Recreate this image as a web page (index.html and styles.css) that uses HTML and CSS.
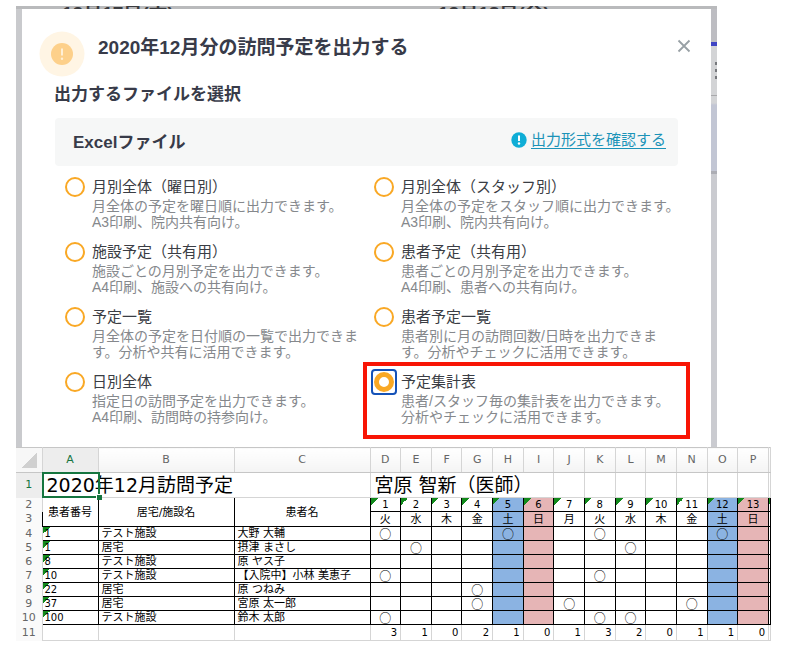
FILE: index.html
```html
<!DOCTYPE html>
<html lang="ja">
<head>
    <meta charset="UTF-8">
    <meta name="viewport" content="width=device-width, initial-scale=1.0">
    <title>訪問予定の出力</title>
    <link rel="stylesheet" href="styles.css">
</head>
<body>
    <main class="page">
        <div class="screen">
            <div class="calendar-days">
                <span>12月17日(木)</span>
                <span>12月18日(金)</span>
            </div>
            <div class="screen-body">
                <section class="modal">
                    <header class="modal-header">
                        <svg class="warning-icon" viewBox="0 0 46 46">
                            <circle cx="23" cy="23" r="22.5" fill="#fff5e4"/>
                            <circle cx="23" cy="23" r="11" fill="#fdd08a"/>
                            <path d="M23 17.5v7" stroke="#fff0d6" stroke-width="2"/>
                            <circle cx="23" cy="27.7" r="1.2" fill="#fff0d6"/>
                        </svg>
                        <h1>2020年12月分の訪問予定を出力する</h1>
                        <button class="close-btn" aria-label="閉じる">
                            <svg width="14" height="14" viewBox="0 0 14 14">
                                <path d="M1.5 1.5l11 11M12.5 1.5l-11 11" stroke="#98a0a5" stroke-width="1.8"/>
                            </svg>
                        </button>
                    </header>
                    <h2>出力するファイルを選択</h2>
                    <div class="panel">
                        <h3>Excelファイル</h3>
                        <a href="#">
                            <svg width="16" height="16" viewBox="0 0 16 16">
                                <circle cx="8" cy="8" r="7.7" fill="#0fadd6"/>
                                <path d="M8 3.5v5.5" stroke="#fff" stroke-width="2"/>
                                <circle cx="8" cy="11.5" r="1.2" fill="#fff"/>
                            </svg>
                            <span>出力形式を確認する</span>
                        </a>
                    </div>
                    <div class="options">
                        <div class="option">
                            <input type="radio" name="file" id="monthly-day">
                            <label for="monthly-day">月別全体（曜日別）
                                <small>月全体の予定を曜日順に出力できます。<br>A3印刷、院内共有向け。</small>
                            </label>
                        </div>
                        <div class="option">
                            <input type="radio" name="file" id="monthly-staff">
                            <label for="monthly-staff">月別全体（スタッフ別）
                                <small>月全体の予定をスタッフ順に出力できます。<br>A3印刷、院内共有向け。</small>
                            </label>
                        </div>
                        <div class="option">
                            <input type="radio" name="file" id="facility">
                            <label for="facility">施設予定（共有用）
                                <small>施設ごとの月別予定を出力できます。<br>A4印刷、施設への共有向け。</small>
                            </label>
                        </div>
                        <div class="option">
                            <input type="radio" name="file" id="patient">
                            <label for="patient">患者予定（共有用）
                                <small>患者ごとの月別予定を出力できます。<br>A4印刷、患者への共有向け。</small>
                            </label>
                        </div>
                        <div class="option">
                            <input type="radio" name="file" id="list">
                            <label for="list">予定一覧
                                <small>月全体の予定を日付順の一覧で出力できま<br>す。分析や共有に活用できます。</small>
                            </label>
                        </div>
                        <div class="option">
                            <input type="radio" name="file" id="patient-list">
                            <label for="patient-list">患者予定一覧
                                <small>患者別に月の訪問回数/日時を出力できま<br>す。分析やチェックに活用できます。</small>
                            </label>
                        </div>
                        <div class="option">
                            <input type="radio" name="file" id="daily">
                            <label for="daily">日別全体
                                <small>指定日の訪問予定を出力できます。<br>A4印刷、訪問時の持参向け。</small>
                            </label>
                        </div>
                        <div class="option highlight">
                            <input type="radio" name="file" id="summary" checked>
                            <label for="summary">予定集計表
                                <small>患者/スタッフ毎の集計表を出力できます。<br>分析やチェックに活用できます。</small>
                            </label>
                        </div>
                    </div>
                </section>
                <div class="calendar-edge"></div>
            </div>
        </div>

        <table class="sheet">
            <colgroup>
                <col class="col-head"><col class="col-id"><col class="col-name"><col class="col-name">
                <col span="13">
                <col class="col-last">
            </colgroup>
            <thead id="letters"></thead>
            <tbody id="rows"></tbody>
        </table>
    </main>
    <script>
        const weekdays = ['火', '水', '木', '金', '土', '日', '月', '火', '水', '木', '金', '土', '日'];
        const totals = [3, 1, 0, 2, 1, 0, 1, 3, 2, 0, 1, 1, 0];
        // visits: days of the month with a visit
        const patients = [
            { id: 1, place: 'テスト施設', name: '大野 大輔', visits: [1, 5, 8, 12] },
            { id: 1, place: '居宅', name: '摂津 まさし', visits: [2, 9] },
            { id: 8, place: 'テスト施設', name: '原 ヤス子', visits: [] },
            { id: 10, place: 'テスト施設', name: '【入院中】小林 美恵子', visits: [1, 8] },
            { id: 22, place: '居宅', name: '原 つねみ', visits: [4] },
            { id: 37, place: '居宅', name: '宮原 太一郎', visits: [4, 7, 11] },
            { id: 100, place: 'テスト施設', name: '鈴木 太郎', visits: [1, 8, 9] },
        ];

        function dayClass(i) {
            if (weekdays[i] === '土') return 'sat';
            if (weekdays[i] === '日') return 'sun';
            return '';
        }

        // Column letters
        const letters = 'ABCDEFGHIJKLMNOP'.split('');
        document.getElementById('letters').innerHTML =
            '<tr><th class="corner"></th>' +
            letters.map(l => `<th class="${l === 'A' ? 'active' : ''}">${l}</th>`).join('') +
            '<th></th></tr>';

        // Title and day rows
        let html = `<tr class="title-row"><th class="active">1</th>
            <td colspan="3" class="selected">2020年12月訪問予定</td>
            <td colspan="6">宮原 智新（医師）</td>${'<td></td>'.repeat(8)}</tr>`;
        html += `<tr class="grid-row"><th>2</th>
            <td rowspan="2" class="center">患者番号</td>
            <td rowspan="2" class="center">居宅/施設名</td>
            <td rowspan="2" class="center">患者名</td>
            ${weekdays.map((d, i) => `<td class="day flag ${dayClass(i)}">${i + 1}</td>`).join('')}
            <td class="flag"></td></tr>`;
        html += `<tr class="grid-row week-row"><th>3</th>
            ${weekdays.map((d, i) => `<td class="center ${dayClass(i)}">${d}</td>`).join('')}<td></td></tr>`;

        // Patients
        patients.forEach((p, n) => {
            html += `<tr class="grid-row"><th>${n + 4}</th>
                <td class="id flag">${p.id}</td><td>${p.place}</td><td>${p.name}</td>
                ${weekdays.map((d, i) => `<td class="mark ${dayClass(i)}">${p.visits.includes(i + 1) ? '○' : ''}</td>`).join('')}
                <td></td></tr>`;
        });

        // Totals
        html += `<tr class="total-row"><th>11</th><td></td><td></td><td></td>
            ${totals.map(t => `<td>${t}</td>`).join('')}<td></td></tr>`;
        document.getElementById('rows').innerHTML = html;
    </script>
</body>
</html>
```

FILE: styles.css
```css
*,
*::before,
*::after {
    box-sizing: border-box;
}
body {
    margin: 0;
    background: #fff;
    color: #33363f;
    font-family: "Liberation Sans", "Noto Sans CJK JP", sans-serif;
}
h1, h2, h3 {
    margin: 0;
    font-weight: bold;
    color: #383b49;
}
.page {
    padding: 6px 29px 0 16px;
}

/* Calendar behind the dialog */
.screen {
    margin-right: 54px;
    padding-left: 6px;
    background: #c9cacd;
}
.calendar-days {
    display: grid;
    grid-template-columns: 376px 1fr;
    height: 3px;
    padding-left: 40px;
    margin-left: -6px;
    overflow: hidden;
    background: #b9babc;
    color: #3a3b3f;
    font-size: 19px;
    line-height: 15px;
    font-weight: bold;
}
.calendar-days span {
    padding-left: 6px;
}
.screen-body {
    display: flex;
}
.calendar-edge {
    width: 6px;
    background:
        linear-gradient(#d3d4d6, #d3d4d6) 0 50px / 4px 24px no-repeat,
        linear-gradient(#bdbdc2 33px, #3f45c4 33px 37px, #d3d4d6 37px 53px,
        #77797d 53px 56px, #d3d4d6 56px 60px, #77797d 60px 63px, #d3d4d6 63px 67px,
        #77797d 67px 70px, #d3d4d6 70px 86px, #a9a9ac 86px 87px, #d3d4d6 87px 94px,
        #c2c6d4 96px 162px, #acadb4 162px 165px, #cacbd0 165px);
}

/* Dialog */
.modal {
    flex: 1;
    padding: 22px 0;
    background: #fff;
}
.modal-header {
    display: flex;
    align-items: flex-start;
    padding: 0 20px 0 17px;
}
.warning-icon {
    width: 46px;
    height: 46px;
    margin-right: 13px;
}
.modal-header h1 {
    flex: 1;
    padding-top: 3px;
    font-size: 19px;
    line-height: 28px;
}
.close-btn {
    display: flex;
    padding: 8px 0;
    border: none;
    background: none;
    cursor: pointer;
}
.modal h2 {
    margin: 6px 32px 11px;
    font-size: 17px;
    line-height: 24px;
}
.panel {
    display: flex;
    justify-content: space-between;
    align-items: center;
    height: 48px;
    margin: 0 33px;
    padding: 0 12px 0 18px;
    border-radius: 4px;
    background: #f6f7f7;
}
.panel h3 {
    padding-top: 2px;
    font-size: 17px;
    line-height: 24px;
}
.panel a {
    display: flex;
    align-items: center;
    gap: 4px;
    padding-bottom: 4px;
    color: #1b93b8;
    font-size: 15px;
    line-height: 22px;
    text-decoration: none;
}
.panel a span {
    text-decoration: underline;
    text-underline-offset: 3px;
}
.options {
    display: grid;
    grid-template-columns: 1fr 1fr;
    row-gap: 11px;
    margin: 10px 28px 0 43px;
}
.option {
    display: flex;
    gap: 7px;
    position: relative;
}
.option input {
    appearance: none;
    flex: none;
    width: 20px;
    height: 20px;
    margin: 1px 0;
    border: 2px solid #f9a825;
    border-radius: 50%;
    background: #fff;
}
.option input:checked {
    border-width: 5px;
}
.option label {
    color: #3a3d44;
    font-size: 15px;
    line-height: 22px;
    white-space: nowrap;
}
.option small {
    display: block;
    color: #85888c;
    font-size: 14px;
    line-height: 16px;
}
/* focus ring and red frame round the chosen file */
.highlight::before {
    content: "";
    position: absolute;
    top: -2px;
    left: -3px;
    width: 26px;
    height: 26px;
    border: 2px solid #1452b8;
    border-radius: 4px;
}
.highlight::after {
    content: "";
    position: absolute;
    inset: -9px -7px -14px -11px;
    border: 4px solid #f81505;
}

/* Spreadsheet */
.sheet {
    width: 100%;
    border-collapse: collapse;
    table-layout: fixed;
    color: #000;
    font-size: 11px;
    line-height: 12px;
    font-family: "DejaVu Sans", "Noto Sans CJK JP", sans-serif;
    border-top: 1px solid #c6c6c6;
}
.col-head {
    width: 26px;
}
.col-id {
    width: 56px;
}
.col-name {
    width: 136px;
}
.col-last {
    width: 2px;
}
.sheet th,
.sheet td {
    padding: 0;
    white-space: nowrap;
}
.sheet th {
    color: #666;
    font-weight: normal;
    border-right: 1px solid #d5d5d5;
}
.sheet thead th {
    height: 25px;
    border-bottom: 1px solid #c6c6c6;
    background: linear-gradient(#fff, #f4f4f4);
}
.sheet thead th.active {
    background: #ededed;
    border-bottom-color: #15753f;
}
.sheet th.active {
    color: #15753f;
    background: #ededed;
}
.sheet thead th.corner {
    background: linear-gradient(135deg, transparent 50%, #d0d0d0 50%) 5px 5px / 16px 15px no-repeat, #f7f7f7;
}
.sheet tbody th {
    background: #fafafa;
}
.sheet .title-row td {
    height: 25px;
    padding-left: 4px;
    border: 1px solid #d5d5d5;
    font-size: 19px;
    line-height: 22px;
}
.sheet .selected {
    position: relative;
}
.selected::before {
    content: "";
    position: absolute;
    top: -1px;
    left: -1px;
    width: 58px;
    height: 26px;
    border: 2px solid #15753f;
}
.selected::after {
    content: "";
    position: absolute;
    left: 53px;
    bottom: -3px;
    width: 6px;
    height: 6px;
    border: 1px solid #fff;
    border-width: 1px 0 0 1px;
    background: #15753f;
}
.grid-row {
    height: 14px;
}
.week-row {
    height: 15px;
}
.sheet .grid-row td {
    padding: 1px 0 0 3px;
    border: 1px solid #000;
}
.sheet .grid-row .center,
.sheet .grid-row .day {
    padding: 1px 0 0;
    text-align: center;
}
.sheet .grid-row .id {
    padding-left: 2px;
}
.day,
.id,
.total-row td {
    font-size: 10px;
}
.flag {
    background: linear-gradient(135deg, #128a1c 50%, transparent 50%) 0 0 / 7px 7px no-repeat;
}
.sheet .grid-row .mark {
    padding: 0;
    font-family: "Noto Sans CJK JP", sans-serif;
    font-size: 12px;
    text-align: center;
}
.sat {
    background-color: #8bb3e2;
}
.sun {
    background-color: #e6b5b6;
}
.total-row {
    height: 16px;
}
.sheet .total-row td {
    padding: 1px 3px 0 0;
    border-right: 1px solid #d5d5d5;
    border-bottom: 1px solid #d5d5d5;
    text-align: right;
}
```
